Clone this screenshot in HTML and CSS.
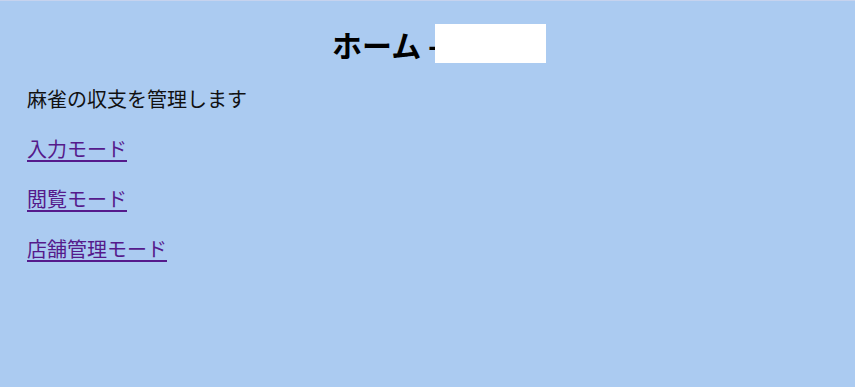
FILE: index.html
```html
<!DOCTYPE html>
<html lang="ja">
<head>
<meta charset="utf-8">
<title>ホーム</title>
<link rel="stylesheet" href="styles.css">
</head>
<body>
<div class="page">
  <h1 class="title">ホーム - <span class="mask"></span></h1>
  <p class="lead">麻雀の収支を管理します</p>
  <a class="mode" href="#input">入力モード</a>
  <a class="mode" href="#view">閲覧モード</a>
  <a class="mode" href="#shop">店舗管理モード</a>
</div>
</body>
</html>
```
FILE: styles.css
```css
html, body {
  margin: 0;
  padding: 0;
  height: 100%;
}
body {
  background: #abcbf1;
  border-top: 1px solid #c6d3ee;
  box-sizing: border-box;
  font-family: "Noto Sans CJK JP", "Noto Sans", sans-serif;
  color: #111;
}
.page {
  display: flex;
  flex-direction: column;
  align-items: flex-start;
  gap: 20px;
  padding: 23px 27px 0;
}
.title {
  align-self: stretch;
  margin: 0;
  text-align: center;
  font-size: 30px;
  line-height: 40px;
  font-weight: bold;
  color: #000;
  padding-left: 23px;
}
.mask {
  display: inline-block;
  width: 111px;
  height: 39px;
  background: #fff;
  vertical-align: top;
  margin-left: -11px;
}
.lead {
  margin: 0;
  font-size: 20px;
  line-height: 30px;
}
.mode {
  font-size: 20px;
  line-height: 30px;
  color: #551a8b;
  text-decoration: underline;
  text-underline-offset: 3px;
}
```
